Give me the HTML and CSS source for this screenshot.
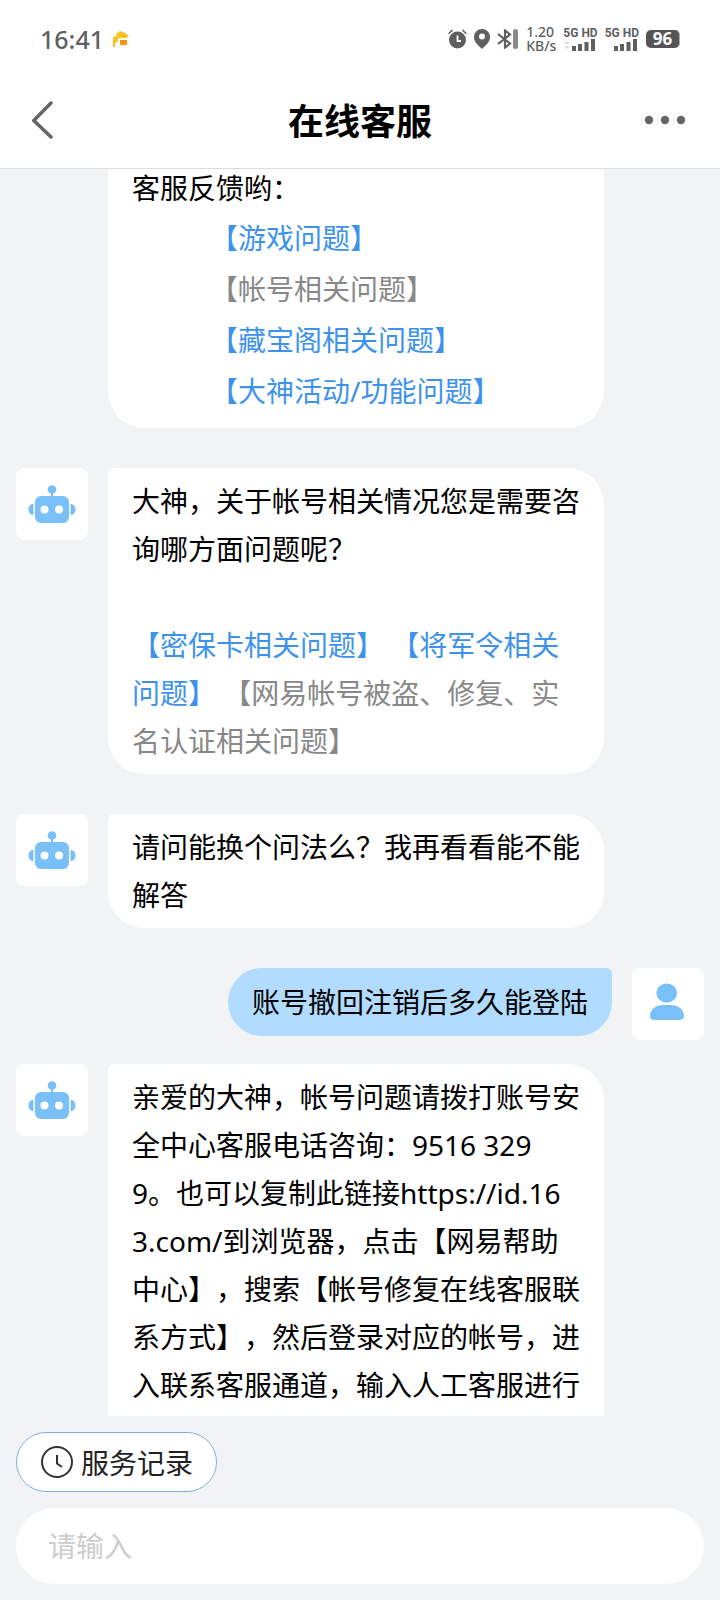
FILE: index.html
```html
<!DOCTYPE html>
<html lang="zh-CN">
<head>
    <meta charset="UTF-8">
    <meta name="viewport" content="width=device-width, initial-scale=1">
    <title>在线客服</title>
    <link rel="stylesheet" href="styles.css">
</head>
<body>
    <!-- 图标 -->
    <svg class="icons" aria-hidden="true">
        <symbol id="robot" viewBox="0 0 72 72">
            <circle cx="36" cy="21.500" r="4.300"/>
            <rect x="35" y="24" width="2" height="5"/>
            <rect x="19" y="28" width="34" height="27" rx="6"/>
            <path d="M17.500 36v11c-3 0-5-2-5-5.500s2-5.500 5-5.500zM54.500 36v11c3 0 5-2 5-5.500s-2-5.500-5-5.500z"/>
            <circle cx="28.500" cy="41.500" r="4" fill="#fff"/>
            <circle cx="43" cy="41.500" r="4" fill="#fff"/>
        </symbol>
        <symbol id="user" viewBox="0 0 72 72">
            <ellipse cx="34.700" cy="25" rx="10.400" ry="9.500"/>
            <path d="M18 48.500C18 41 24 37 31 37h7.500C46 37 52 41 52 48.500c0 2.500-2 3.500-5 3.500H23c-3 0-5-1-5-3.500z"/>
        </symbol>
    </svg>

    <!-- 状态栏 -->
    <div class="status">
        <span class="time">16:41</span>
        <svg class="app" width="18" height="18" viewBox="0 0 18 18">
            <path d="M8 1l5 2 4 3-3 2H6v3l-3 2v4H1V7l5-1-3-1z" fill="#fcc21b"/>
            <path d="M8 10h7v5H8z" fill="#fb9410"/>
        </svg>
        <div class="right">
            <svg width="19" height="20" viewBox="0 0 19 20">
                <circle cx="9.500" cy="11" r="8.500" fill="#5f5f5f"/>
                <path d="M.7 4.700L4.500 1M18.300 4.700L14.500 1" stroke="#5f5f5f" stroke-width="1.600"/>
                <path d="M9.500 6.500V12H13" fill="none" stroke="#fff" stroke-width="1.800"/>
            </svg>
            <svg width="16" height="20" viewBox="0 0 16 20">
                <path d="M8 0a8 8 0 0 1 8 8c0 5-4 8-8 12C4 16 0 13 0 8a8 8 0 0 1 8-8z" fill="#5f5f5f"/>
                <circle cx="8" cy="7.500" r="3" fill="#fff"/>
            </svg>
            <svg width="22" height="20" viewBox="0 0 22 20">
                <path d="M1 5l12 9.500-5 4V1.500l5 4L1 15" fill="none" stroke="#5f5f5f" stroke-width="2.200"/>
                <rect x="16" y="0" width="5" height="20" rx="2.500" fill="#8a8a8a"/>
            </svg>
            <div class="speed">1.20<br>KB/s</div>
            <div class="signal">
                <span>5G HD</span>
                <svg width="32" height="12" viewBox="0 0 32 12">
                    <path d="M1 5l3-3 3 3zM1 7l3 3 3-3z" fill="#ddd"/>
                    <path d="M11 7v5M17 5v7M23.500 3v9M30 0v12" stroke="#5f5f5f" stroke-width="4"/>
                </svg>
            </div>
            <div class="signal">
                <span>5G HD</span>
                <svg width="32" height="12" viewBox="0 0 32 12">
                    <path d="M11 7v5M17 5v7M23.500 3v9M30 0v12" stroke="#5f5f5f" stroke-width="4"/>
                </svg>
            </div>
            <div class="battery">96</div>
        </div>
    </div>

    <header class="header">
        <button class="back" aria-label="返回">
            <svg width="24" height="40" viewBox="0 0 24 40">
                <path d="M19 3L1.800 20.500 19 37" fill="none" stroke="#666" stroke-width="3.500" stroke-linecap="round" stroke-linejoin="round"/>
            </svg>
        </button>
        <h1>在线客服</h1>
        <button class="more" aria-label="更多">
            <svg width="42" height="10" viewBox="0 0 42 10">
                <g fill="#666"><circle cx="5" cy="5" r="4.200"/><circle cx="21" cy="5" r="4.200"/><circle cx="37" cy="5" r="4.200"/></g>
            </svg>
        </button>
    </header>

    <!-- 聊天记录 -->
    <main class="chat">
        <div class="row">
            <div class="avatar empty"></div>
            <div class="bubble scrolled">
                <p>客服反馈哟：</p>
                <ul>
                    <li><a href="#">【游戏问题】</a></li>
                    <li><a href="#" class="used">【帐号相关问题】</a></li>
                    <li><a href="#">【藏宝阁相关问题】</a></li>
                    <li><a href="#">【大神活动/功能问题】</a></li>
                </ul>
            </div>
        </div>
        <div class="row">
            <div class="avatar"><svg><use href="#robot"/></svg></div>
            <div class="bubble">大神，关于帐号相关情况您是需要咨询哪方面问题呢？<br><br><a href="#">【密保卡相关问题】</a>&nbsp;<a href="#">【将军令相关问题】</a>&nbsp;<a href="#" class="used">【网易帐号被盗、修复、实名认证相关问题】</a></div>
        </div>
        <div class="row">
            <div class="avatar"><svg><use href="#robot"/></svg></div>
            <div class="bubble">请问能换个问法么？我再看看能不能解答</div>
        </div>
        <div class="row mine">
            <div class="bubble">账号撤回注销后多久能登陆</div>
            <div class="avatar"><svg><use href="#user"/></svg></div>
        </div>
        <div class="row">
            <div class="avatar"><svg><use href="#robot"/></svg></div>
            <div class="bubble last">亲爱的大神，帐号问题请拨打账号安全中心客服电话咨询：9516 329<br>9。也可以复制此链接https://id.16<br>3.com/到浏览器，点击【网易帮助<br>中心】，搜索【帐号修复在线客服联系方式】，然后登录对应的帐号，进入联系客服通道，输入人工客服进行</div>
        </div>
    </main>

    <!-- 底部输入 -->
    <footer class="footer">
        <button class="record">
            <svg width="34" height="34" viewBox="0 0 34 34">
                <circle cx="17" cy="17" r="15" fill="none" stroke="#333" stroke-width="2"/>
                <path d="M17 10v8.500l5 3.500" fill="none" stroke="#333" stroke-width="2"/>
            </svg>
            服务记录
        </button>
        <input type="text" class="message" placeholder="请输入" aria-label="请输入">
    </footer>
</body>
</html>
```
FILE: styles.css
```css
:root {
    --blue: #3d93ec;
    --lightBlue: #7ac0f8;
    --gray: #5f5f5f;
    --bg: #f2f3f5;
}

* { box-sizing: border-box; }

body {
    display: flex;
    flex-direction: column;
    height: 100vh;
    margin: 0;
    background-color: var(--bg);
    color: black;
    font-family: "Noto Sans", "Noto Sans CJK SC", sans-serif;
    font-size: 28px;
    text-spacing-trim: space-all;
}

button, input {
    border: none;
    font-family: inherit;
    font-size: 28px;
}
button { cursor: pointer; }
svg { display: block; }
.icons {
    position: absolute;
    width: 0;
    height: 0;
}

/*---------- 状态栏 ----------*/
.status {
    display: flex;
    align-items: center;
    gap: 8px;
    height: 77px;
    padding: 0 40px;
    background-color: white;
    color: var(--gray);
}
.time {
    font-size: 25px;
    font-weight: 500;
}
.right {
    display: flex;
    align-items: center;
    gap: 7px;
    margin-left: auto;
}
.speed {
    font-size: 14px;
    font-weight: 500;
    line-height: 14px;
}
.signal span {
    display: block;
    font-family: Roboto, sans-serif;
    font-size: 12px;
    font-weight: bold;
    line-height: 12px;
    white-space: nowrap;
}
.battery {
    width: 34px;
    border-right: 1px solid #aaa;
    border-radius: 5px;
    background-color: #555;
    color: white;
    font-size: 17px;
    font-weight: bold;
    line-height: 18px;
    text-align: center;
}

/*---------- 标题栏 ----------*/
.header {
    display: flex;
    justify-content: space-between;
    align-items: center;
    height: 92px;
    padding: 0 32px 6px;
    border-bottom: 1px solid #ddd;
    background-color: white;
}
.header button {
    display: flex;
    width: 44px;
    padding: 0;
    background: none;
}
.header h1 {
    margin: 0;
    font-size: 36px;
}

/*---------- 聊天记录 ----------*/
.chat {
    flex: 1;
    min-height: 0;
    padding: 0 16px;
    overflow: hidden;
}
.row {
    display: flex;
    align-items: flex-start;
    gap: 20px;
    margin-bottom: 40px;
    padding-right: 100px;
}
.avatar {
    flex: none;
    width: 72px;
    height: 72px;
    border-radius: 8px;
    background-color: white;
}
.avatar svg {
    width: 72px;
    height: 72px;
    fill: var(--lightBlue);
}
.empty { visibility: hidden; }
.bubble {
    padding: 9px 24px;
    border-radius: 6px 36px 36px 36px;
    background-color: white;
    line-height: 48px;
}
.bubble a {
    color: var(--blue);
    text-decoration: none;
}
.bubble a.used { color: #888; }

/* 上面的部分已经滚出屏幕 */
.scrolled {
    flex: 1;
    padding: 0 24px 11px;
    border-radius: 0 0 36px 36px;
}
.scrolled p {
    margin: 0 0 6px;
    line-height: 38px;
}
.scrolled ul {
    margin: 0;
    padding-left: 78px;
    list-style: none;
    line-height: 51px;
}
.last { border-radius: 6px 36px 0 0; }

/* 用户自己的消息 */
.mine {
    justify-content: flex-end;
    margin-bottom: 24px;
    padding-right: 0;
}
.mine .bubble {
    padding: 10px 24px;
    border-radius: 36px 6px 36px 36px;
    background-color: #b1dcff;
}

/*---------- 底部 ----------*/
.footer {
    display: flex;
    flex-direction: column;
    align-items: flex-start;
    gap: 16px;
    padding: 16px;
}
.record {
    display: flex;
    align-items: center;
    gap: 7px;
    height: 60px;
    padding: 0 23px;
    border: 1px solid #82afdc;
    border-radius: 30px;
    background-color: white;
    color: #222;
}
.message {
    width: 100%;
    height: 76px;
    padding: 0 32px;
    border-radius: 38px;
    background-color: white;
}
.message::placeholder { color: #ccc; }
```
